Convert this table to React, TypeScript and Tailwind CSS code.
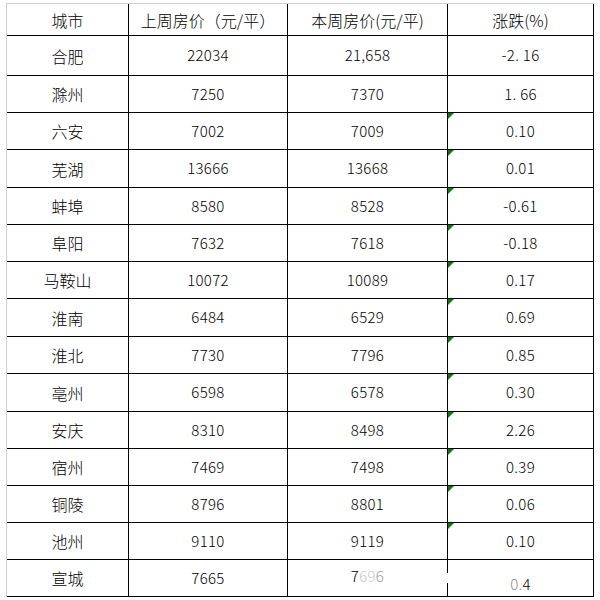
const rows: [string, string, string, string, boolean][] = [
  ["合肥", "22034", "21,658", "-2. 16", false],
  ["滁州", "7250", "7370", "1. 66", false],
  ["六安", "7002", "7009", "0.10", true],
  ["芜湖", "13666", "13668", "0.01", true],
  ["蚌埠", "8580", "8528", "-0.61", true],
  ["阜阳", "7632", "7618", "-0.18", true],
  ["马鞍山", "10072", "10089", "0.17", true],
  ["淮南", "6484", "6529", "0.69", true],
  ["淮北", "7730", "7796", "0.85", true],
  ["亳州", "6598", "6578", "0.30", true],
  ["安庆", "8310", "8498", "2.26", true],
  ["宿州", "7469", "7498", "0.39", true],
  ["铜陵", "8796", "8801", "0.06", true],
  ["池州", "9110", "9119", "0.10", true],
]

const cell = "flex items-center justify-center border-r border-b border-black"
const num = "tabular-nums text-[15px] tracking-[0.3px]"

const Flag = () => (
  <svg className="absolute left-0 top-0" width="6" height="6" viewBox="0 0 6 6">
    <polygon points="0,0 6,0 0,6" fill="#0b7a0b" />
  </svg>
)

const App = () => {
  return (
    <div className="w-[600px] h-[600px] bg-white pt-[3px] pl-[6px] text-black text-[16px] font-light font-['Noto_Sans_CJK_SC',sans-serif]">
      <div className="grid w-max grid-cols-[122px_159px_160px_146px] grid-rows-[32px_40px_37px_37px_38px_37px_37px_37px_38px_37px_38px_37px_37px_37px_37px_37px] border-l border-t border-[#d0d0d0]">
        <div className={cell}>城市</div>
        <div className={cell}>上周房价（元/平）</div>
        <div className={cell}>本周房价(元/平)</div>
        <div className={cell}>涨跌(%)</div>

        {rows.map(([city, last, now, pct, flag]) => (
          <div key={city} className="contents">
            <div className={cell}>{city}</div>
            <div className={`${cell} ${num}`}>{last}</div>
            <div className={`${cell} ${num}`}>{now}</div>
            <div className={`${cell} ${num} relative whitespace-pre`}>
              {flag && <Flag />}
              {pct}
            </div>
          </div>
        ))}

        <div className={cell}>宣城</div>
        <div className={`${cell} ${num}`}>7665</div>
        <div className={`${cell} ${num} relative pb-[4px]`}>
          <span>
            7<span className="text-[#c8c8c8]">69</span>
            <span className="text-[#9a9a9a]">6</span>
          </span>
          <span className="absolute right-[-1px] top-[13px] h-[10px] w-[1px] bg-white" />
        </div>
        <div className={`${cell} ${num} items-end pb-[1px]`}>
          <span>
            <span className="text-[#8a8a8a]">0.</span>4
          </span>
        </div>
      </div>
    </div>
  )
}

export default App
